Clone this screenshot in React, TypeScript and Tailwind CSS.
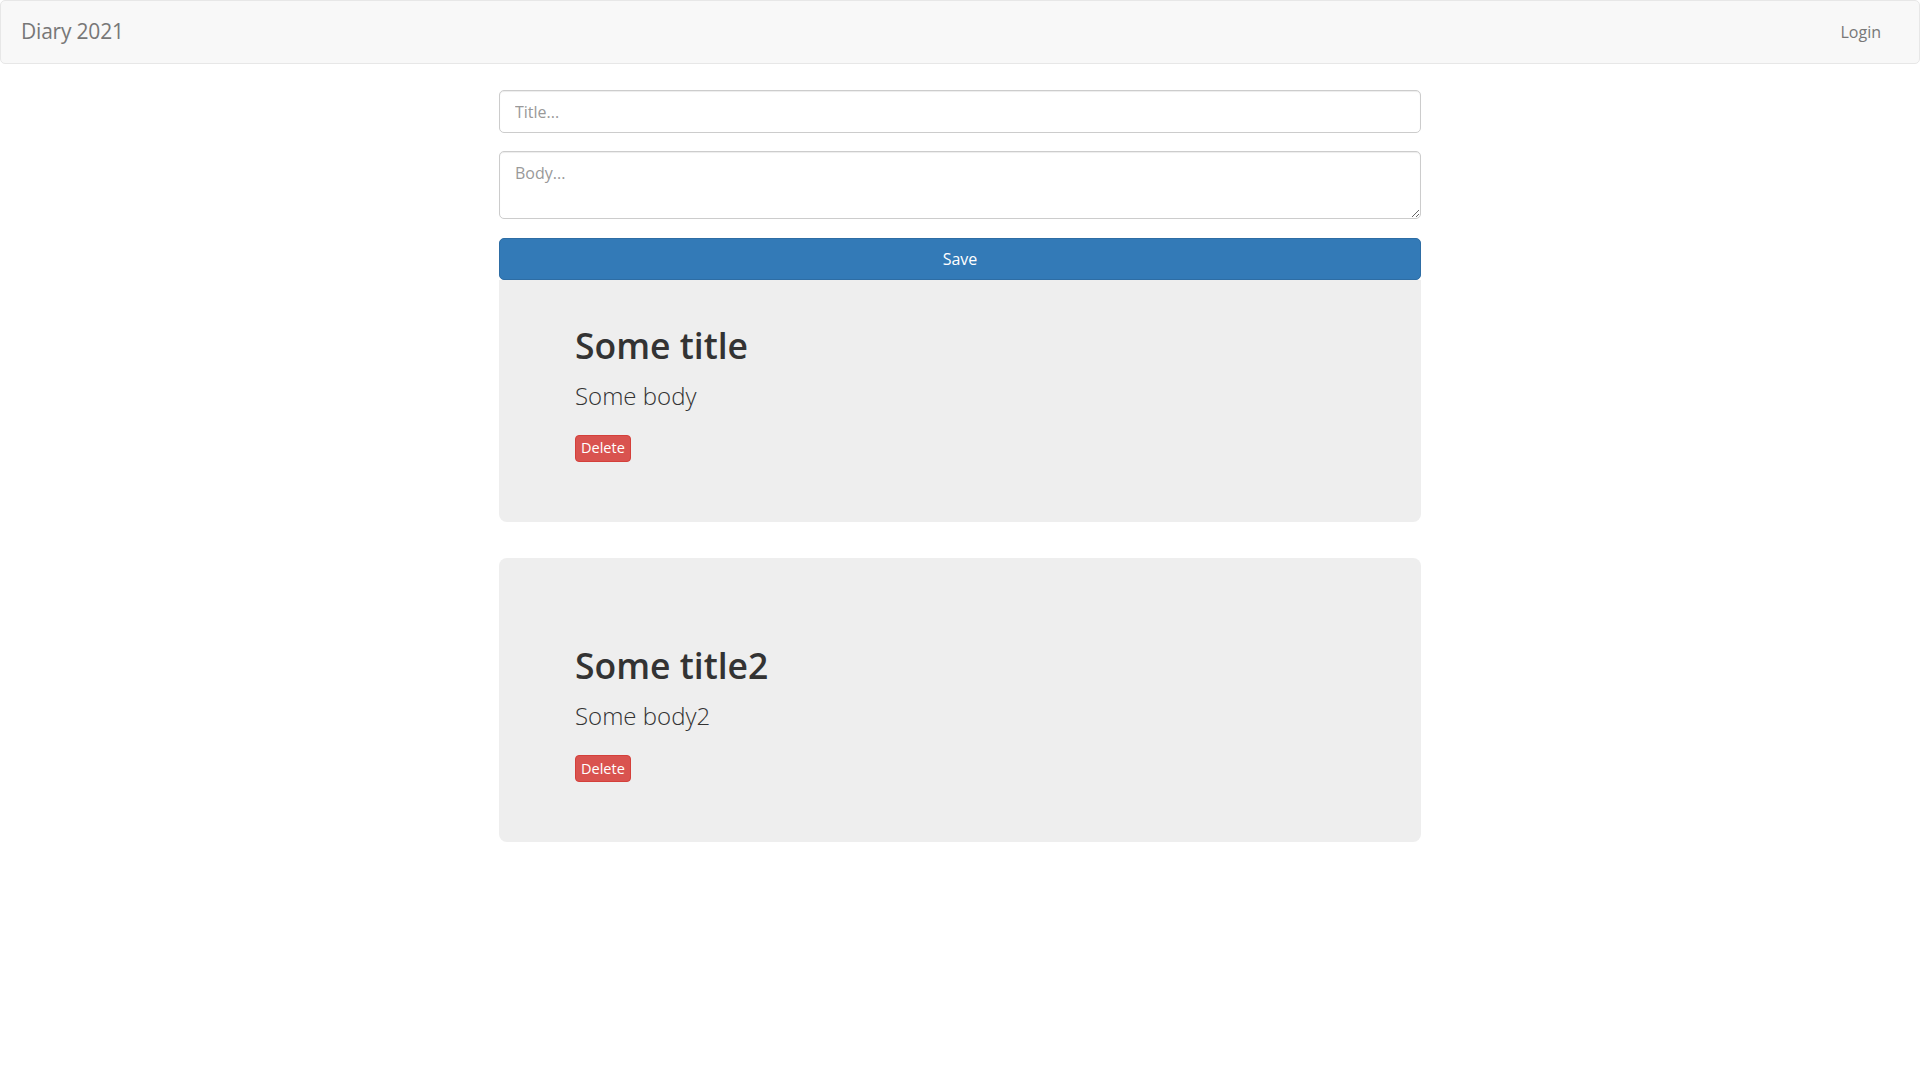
import React from "react";

type Entry = { id: number; title: string; body: string };

const entries: Entry[] = [
  { id: 1, title: "Some title", body: "Some body" },
  { id: 2, title: "Some title2", body: "Some body2" },
];

export default function App() {
  return (
    <div className="min-h-screen bg-white font-['Open_Sans','Noto_Sans',sans-serif] text-[#333]">
      {/* navbar */}
      <nav className="h-[64px] border border-[#e7e7e7] bg-[#f8f8f8] rounded-[5px] flex items-center justify-between pl-[20px] pr-[38px]">
        <span className="text-[21px] text-[#777] tracking-[-0.2px]">Diary 2021</span>
        <span className="text-[16px] text-[#777]">Login</span>
      </nav>

      <main className="w-[922px] mx-auto pt-[26px]">
        <input
          className="w-full h-[43px] border border-[#ccc] rounded-[5px] px-[15px] text-[16px] placeholder:text-[#999] shadow-[inset_0_1px_1px_rgba(0,0,0,0.075)] outline-none"
          placeholder="Title..."
        />
        <textarea
          className="mt-[18px] block w-full h-[68px] border border-[#ccc] rounded-[5px] px-[15px] py-[9px] text-[16px] placeholder:text-[#999] shadow-[inset_0_1px_1px_rgba(0,0,0,0.075)] outline-none"
          placeholder="Body..."
        />
        <button className="mt-[19px] w-full h-[42px] bg-[#337ab7] border border-[#2e6da4] rounded-[5px] text-white text-[16px]">
          Save
        </button>

        {entries.map((e, i) => (
          <div
            key={e.id}
            className={
              i === 0
                ? "bg-[#eee] rounded-b-[8px] pl-[76px] pt-[46px] pb-[60px]"
                : "mt-[36px] bg-[#eee] rounded-[8px] pl-[76px] pt-[88px] pb-[60px]"
            }
          >
            <h1 className="text-[35.5px] font-semibold leading-[1.1] text-[#333]">{e.title}</h1>
            <p className="mt-[15px] text-[24px] font-light leading-[1.3] text-[#333]">{e.body}</p>
            <button className="mt-[24px] h-[27px] px-[5px] bg-[#d9534f] border border-[#d43f3a] rounded-[4px] text-white text-[14.5px] leading-none">
              Delete
            </button>
          </div>
        ))}
      </main>
    </div>
  );
}
